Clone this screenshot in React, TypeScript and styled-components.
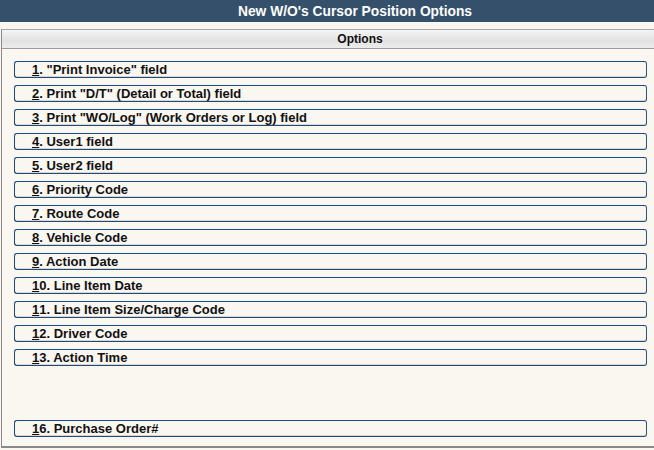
import { FC } from "react";
import styled, { createGlobalStyle } from "styled-components";

const Global = createGlobalStyle`
  html, body { margin: 0; padding: 0; background: #faf6f0; }
  body { font-family: "Liberation Sans", Arial, sans-serif; }
`;

const Page = styled.div`
  width: 654px;
  height: 450px;
  display: flex;
  flex-direction: column;
  background: #faf6f0;
  overflow: hidden;
`;

const TitleBar = styled.div`
  height: 22px;
  background: #34506a;
  color: #ffffff;
  font-weight: bold;
  font-size: 13.8px;
  display: flex;
  align-items: center;
  justify-content: center;
  padding-left: 56px;
  flex-shrink: 0;
`;

const Panel = styled.div`
  margin: 7px 0 2px 1px;
  flex: 1;
  border-left: 1px solid #8a8a8a;
  border-top: 1px solid #a8a8a8;
  border-bottom: 2px solid #8a8a8a;
  display: flex;
  flex-direction: column;
`;

const PanelHeader = styled.div`
  height: 18px;
  background: linear-gradient(#f4f4f4, #e2e2e2 60%, #ececec);
  border-bottom: 1px solid #9a9a9a;
  font-size: 12px;
  font-weight: bold;
  color: #111;
  display: flex;
  align-items: center;
  justify-content: center;
  padding-left: 64px;
`;

const List = styled.div`
  display: flex;
  flex-direction: column;
  gap: 7px;
  padding: 12px 7px 0 12px;
`;

const Spacer = styled.div`
  height: 40px;
`;

const OptionButton = styled.div`
  height: 15px;
  border: 1px solid #1b4a86;
  border-right-color: #2c558e;
  border-radius: 3px;
  background: #faf6f0;
  box-shadow: inset 0 -1px 0 #dcd6c6;
  font-size: 13px;
  font-weight: bold;
  color: #111;
  display: flex;
  align-items: center;
  padding-left: 17px;
  white-space: nowrap;
  cursor: pointer;
`;

const Key = styled.span`
  text-decoration: underline;
`;

const options: [string, string][] = [
  ["1", '"Print Invoice" field'],
  ["2", 'Print "D/T" (Detail or Total) field'],
  ["3", 'Print "WO/Log" (Work Orders or Log) field'],
  ["4", "User1 field"],
  ["5", "User2 field"],
  ["6", "Priority Code"],
  ["7", "Route Code"],
  ["8", "Vehicle Code"],
  ["9", "Action Date"],
  ["10", "Line Item Date"],
  ["11", "Line Item Size/Charge Code"],
  ["12", "Driver Code"],
  ["13", "Action Time"],
];

const Option: FC<{ num: string; label: string }> = ({ num, label }) => (
  <OptionButton>
    <Key>{num[0]}</Key>
    {num.slice(1)}. {label}
  </OptionButton>
);

export default function App() {
  return (
    <Page>
      <Global />
      <TitleBar>New W/O's Cursor Position Options</TitleBar>
      <Panel>
        <PanelHeader>Options</PanelHeader>
        <List>
          {options.map(([n, l]) => (
            <Option key={n} num={n} label={l} />
          ))}
          <Spacer />
          <Option num="16" label="Purchase Order#" />
        </List>
      </Panel>
    </Page>
  );
}
